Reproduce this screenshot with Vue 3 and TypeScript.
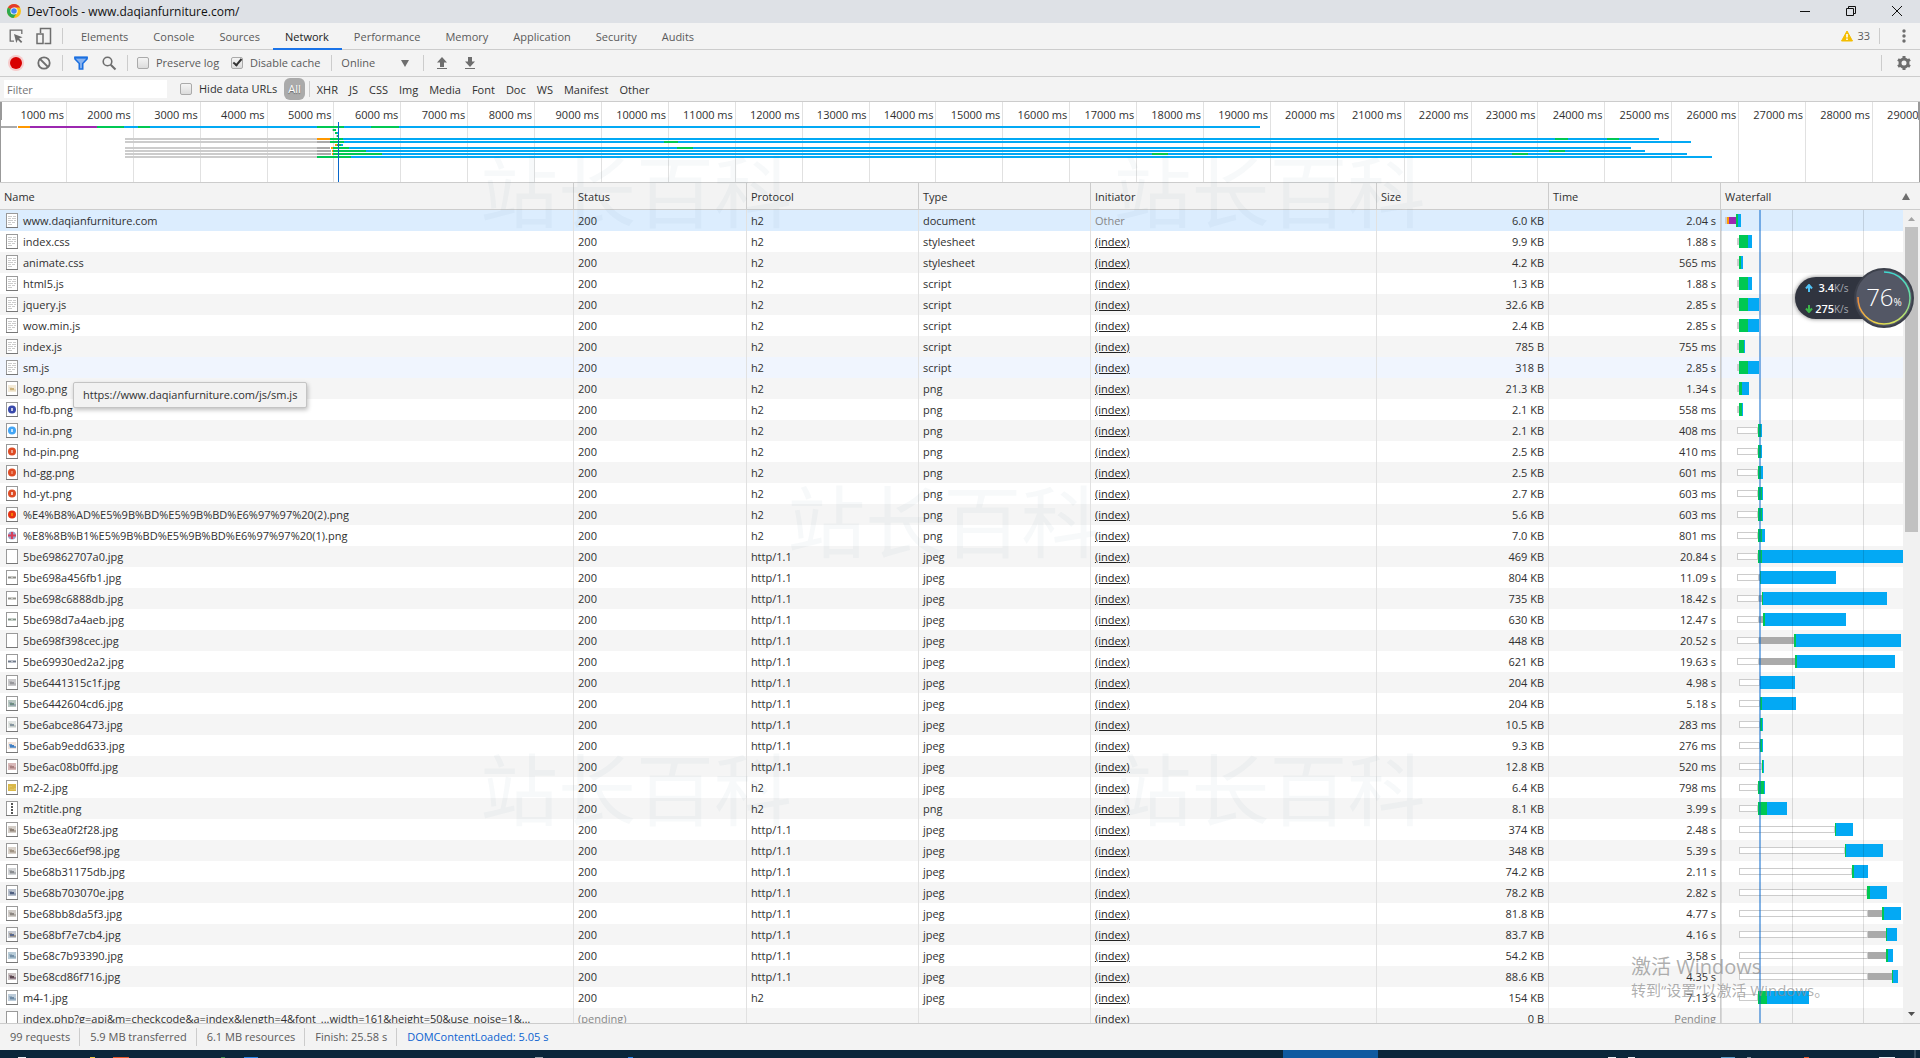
<script setup lang="ts">
type Kind = 'queue' | 'stall' | 'dns' | 'ssl' | 'wait' | 'load' | 'idle'
type Segment = [Kind, number, number]
interface Request {
  name: string
  status: string
  protocol: string
  type: string
  initiator: string
  size: string
  time: string
  thumb: string[]
  bars: Segment[]
}

const tabs = ['Elements', 'Console', 'Sources', 'Network', 'Performance', 'Memory', 'Application', 'Security', 'Audits']
const kinds = ['XHR', 'JS', 'CSS', 'Img', 'Media', 'Font', 'Doc', 'WS', 'Manifest', 'Other']
const ticks = Array.from({ length: 29 }, (_, i) => `${(i + 1) * 1000} ms`)
const columns = ['Name', 'Status', 'Protocol', 'Type', 'Initiator', 'Size', 'Time', 'Waterfall']
const summary = ['99 requests', '5.9 MB transferred', '6.1 MB resources', 'Finish: 25.58 s', 'DOMContentLoaded: 5.05 s']

const colors: Record<Kind, string> = {
  queue: '#ffffff', idle: '#cccccc', stall: '#aaaaaa', dns: '#ff9800', ssl: '#9c27b0', wait: '#00c853', load: '#03a9f4',
}

// Each overview lane is a list of [kind, start, end] on a 1920-unit axis.
const lanes: Segment[][] = [
  [['stall', 1, 17], ['dns', 18, 30], ['ssl', 30, 97], ['wait', 97, 124], ['load', 124, 138], ['wait', 138, 150], ['load', 150, 317], ['wait', 317, 344], ['load', 344, 371], ['wait', 371, 399], ['load', 399, 1260]],
  [['idle', 332, 333], ['wait', 333, 336]],
  [['wait', 335, 337], ['load', 337, 338]],
  [['idle', 336, 337], ['wait', 337, 339]],
  [['idle', 125, 317], ['dns', 317, 330], ['wait', 330, 343], ['load', 343, 1659], ['wait', 1555, 1568], ['wait', 1607, 1619]],
  [['idle', 125, 317], ['stall', 317, 330], ['wait', 330, 344], ['load', 344, 1691], ['wait', 664, 678]],
  [['dns', 335, 337], ['wait', 337, 341], ['load', 341, 343]],
  [['idle', 125, 317], ['stall', 317, 330], ['dns', 331, 333], ['wait', 333, 349], ['load', 349, 1631], ['wait', 677, 693]],
  [['idle', 125, 317], ['stall', 317, 331], ['dns', 332, 333], ['wait', 333, 366], ['load', 366, 1645], ['wait', 1549, 1565]],
  [['idle', 125, 317], ['stall', 317, 331], ['dns', 332, 333], ['wait', 333, 382], ['load', 382, 1687], ['wait', 1152, 1168], ['wait', 1512, 1528]],
  [['idle', 125, 317], ['wait', 317, 351], ['load', 351, 1712]],
]

const early = (wait: number, load: number): Segment[] => [['idle', 37, 39], ['wait', 39, wait], ['load', wait, load]]
const held = (from: number, to: number, wait: number, load: number): Segment[] => [['queue', from, to], ['wait', to, wait], ['load', wait, load]]
const stalled = (from: number, to: number, gray: number, wait: number, load: number): Segment[] => [['queue', from, to], ['stall', to, gray], ['wait', gray, wait], ['load', wait, load]]

const row = (name: string, protocol: string, type: string, size: string, time: string, thumb: string[], bars: Segment[]): Request =>
  ({ name, status: '200', protocol, type, initiator: '(index)', size, time, thumb, bars })

const doc = ['doc']
const dot = (color: string, mark: string) => ['dot', color, mark]
const wide = (a: string, b: string) => ['wide', a, b]
const pic = (a: string, b: string, c: string) => ['pic', a, b, c]

const requests: Request[] = [
  { ...row('www.daqianfurniture.com', 'h2', 'document', '6.0 KB', '2.04 s', doc, [['idle', 25, 27], ['dns', 27, 29], ['ssl', 29, 36], ['wait', 36, 38], ['load', 38, 41]]), initiator: 'Other' },
  row('index.css', 'h2', 'stylesheet', '9.9 KB', '1.88 s', doc, early(48, 52)),
  row('animate.css', 'h2', 'stylesheet', '4.2 KB', '565 ms', doc, early(41, 43)),
  row('html5.js', 'h2', 'script', '1.3 KB', '1.88 s', doc, early(48, 52)),
  row('jquery.js', 'h2', 'script', '32.6 KB', '2.85 s', doc, early(48, 59)),
  row('wow.min.js', 'h2', 'script', '2.4 KB', '2.85 s', doc, early(48, 59)),
  row('index.js', 'h2', 'script', '785 B', '755 ms', doc, early(44, 45)),
  row('sm.js', 'h2', 'script', '318 B', '2.85 s', doc, early(48, 59)),
  row('logo.png', 'h2', 'png', '21.3 KB', '1.34 s', pic('#f3ead8', '#cdb27a', '#e8dcc0'), early(42, 49)),
  row('hd-fb.png', 'h2', 'png', '2.1 KB', '558 ms', dot('#3949ab', '#ffffff'), early(42, 43)),
  row('hd-in.png', 'h2', 'png', '2.1 KB', '408 ms', dot('#42a5f5', '#ffffff'), held(37, 58, 61, 62)),
  row('hd-pin.png', 'h2', 'png', '2.5 KB', '410 ms', dot('#dd4b24', '#f6c8ba'), held(37, 58, 61, 62)),
  row('hd-gg.png', 'h2', 'png', '2.5 KB', '601 ms', dot('#dd4b24', '#f09a80'), held(37, 58, 61, 63)),
  row('hd-yt.png', 'h2', 'png', '2.7 KB', '603 ms', dot('#dd4b24', '#ffffff'), held(37, 58, 62, 63)),
  row('%E4%B8%AD%E5%9B%BD%E5%9B%BD%E6%97%97%20(2).png', 'h2', 'png', '5.6 KB', '603 ms', dot('#e53212', '#ff9800'), held(37, 58, 62, 63)),
  row('%E8%8B%B1%E5%9B%BD%E5%9B%BD%E6%97%97%20(1).png', 'h2', 'png', '7.0 KB', '801 ms', ['flag'], held(37, 58, 62, 65)),
  row('5be69862707a0.jpg', 'http/1.1', 'jpeg', '469 KB', '20.84 s', [], held(37, 58, 62, 203)),
  row('5be698a456fb1.jpg', 'http/1.1', 'jpeg', '804 KB', '11.09 s', wide('#8a8a86', '#c4c4c0'), stalled(37, 59, 60, 61, 136)),
  row('5be698c6888db.jpg', 'http/1.1', 'jpeg', '735 KB', '18.42 s', wide('#8f8f8a', '#c9c9c4'), stalled(37, 59, 62, 63, 187)),
  row('5be698d7a4aeb.jpg', 'http/1.1', 'jpeg', '630 KB', '12.47 s', wide('#7f8f84', '#c1cbc4'), stalled(37, 59, 63, 65, 146)),
  row('5be698f398cec.jpg', 'http/1.1', 'jpeg', '448 KB', '20.52 s', [], stalled(37, 59, 94, 96, 201)),
  row('5be69930ed2a2.jpg', 'http/1.1', 'jpeg', '621 KB', '19.63 s', wide('#6f7a88', '#b9bec8'), stalled(37, 59, 95, 97, 195)),
  row('5be6441315c1f.jpg', 'http/1.1', 'jpeg', '204 KB', '4.98 s', pic('#c9c9cb', '#97979b', '#b5b5b8'), held(39, 60, 60, 95)),
  row('5be6442604cd6.jpg', 'http/1.1', 'jpeg', '204 KB', '5.18 s', pic('#b9c8c2', '#6d8c82', '#9aa9b0'), held(39, 60, 62, 96)),
  row('5be6abce86473.jpg', 'http/1.1', 'jpeg', '10.5 KB', '283 ms', pic('#e2e6e4', '#8796a0', '#c6ccc8'), held(39, 60, 62, 63)),
  row('5be6ab9edd633.jpg', 'http/1.1', 'jpeg', '9.3 KB', '276 ms', pic('#f1e4dc', '#3f7fc4', '#6f9ccc'), held(39, 60, 62, 63)),
  row('5be6ac08b0ffd.jpg', 'http/1.1', 'jpeg', '12.8 KB', '520 ms', pic('#d8b8b8', '#a98080', '#c4a0a0'), held(39, 62, 63, 64)),
  row('m2-2.jpg', 'h2', 'jpeg', '6.4 KB', '798 ms', pic('#d9b84a', '#d9b84a', '#e0c463'), held(39, 58, 64, 65)),
  row('m2title.png', 'h2', 'png', '8.1 KB', '3.99 s', ['strip'], held(39, 58, 67, 87)),
  row('5be63ea0f2f28.jpg', 'http/1.1', 'jpeg', '374 KB', '2.48 s', pic('#d4cec8', '#8d8278', '#b0a69c'), held(39, 135, 136, 153)),
  row('5be63ec66ef98.jpg', 'http/1.1', 'jpeg', '348 KB', '5.39 s', pic('#d9d2ca', '#a09484', '#beb4a8'), held(39, 145, 146, 183)),
  row('5be68b31175db.jpg', 'http/1.1', 'jpeg', '74.2 KB', '2.11 s', pic('#d2d4d6', '#8a8d90', '#b1b4b8'), held(39, 152, 154, 168)),
  row('5be68b703070e.jpg', 'http/1.1', 'jpeg', '78.2 KB', '2.82 s', pic('#b8c0cc', '#4f5f80', '#94a0b4'), held(39, 167, 170, 187)),
  row('5be68bb8da5f3.jpg', 'http/1.1', 'jpeg', '81.8 KB', '4.77 s', pic('#d0ccc8', '#8c8682', '#b4b0aa'), stalled(39, 168, 182, 184, 201)),
  row('5be68bf7e7cb4.jpg', 'http/1.1', 'jpeg', '83.7 KB', '4.16 s', pic('#c4c8d0', '#58688c', '#a09890'), stalled(39, 168, 186, 187, 197)),
  row('5be68c7b93390.jpg', 'http/1.1', 'jpeg', '54.2 KB', '3.58 s', pic('#b8ccd8', '#7490a8', '#98b0c0'), stalled(39, 168, 186, 188, 193)),
  row('5be68cd86f716.jpg', 'http/1.1', 'jpeg', '88.6 KB', '4.35 s', pic('#c8c0c0', '#5c4850', '#94808c'), stalled(39, 168, 192, 193, 198)),
  row('m4-1.jpg', 'h2', 'jpeg', '154 KB', '7.13 s', pic('#bccbd8', '#6e8aa4', '#96aec2'), held(39, 58, 67, 109)),
  { ...row('index.php?g=api&m=checkcode&a=index&length=4&font_...width=161&height=50&use_noise=1&…', '', '', '0 B', 'Pending', [], []), status: '(pending)' },
]

const isThin = (kind: Kind) => kind === 'idle' || kind === 'stall' || kind === 'dns' || kind === 'ssl'

// Tips of the pinned programs: [start, width, colour] on a 1920-unit axis.
const pinned: [number, number, string][] = [
  [18, 8, '#e8eef2'], [90, 5, '#e8c84a'], [113, 16, '#e2582c'], [221, 4, '#3c8c50'], [244, 14, '#2a86e8'], [535, 8, '#9aa4ac'],
  [628, 5, '#2a86e8'], [1608, 8, '#e8eef2'], [1628, 7, '#e8eef2'], [1721, 14, '#5a9cc8'], [1747, 4, '#8898a4'], [1804, 5, '#e2582c'], [1879, 16, '#e8eef2'],
]
</script>

<template>
  <div class="window">
    <header class="titlebar">
      <svg class="chrome" width="16" height="16" viewBox="0 0 16 16">
        <circle cx="8" cy="8" r="7" fill="#fbc116" />
        <path d="M8 8 1.9 4.5A7 7 0 0 1 14.1 4.5H8z" fill="#e33b2e" />
        <path d="M8 8 1.9 4.5A7 7 0 0 0 7.5 15L11 9.8z" fill="#2da94f" />
        <circle cx="8" cy="8" r="3.6" fill="#fff" />
        <circle cx="8" cy="8" r="2.8" fill="#4285f4" />
      </svg>
      <h1>DevTools - www.daqianfurniture.com/</h1>
      <div class="controls">
        <button aria-label="Minimize"><svg width="12" height="12" viewBox="0 0 12 12"><path d="M1 6.5h10" /></svg></button>
        <button aria-label="Restore"><svg width="12" height="12" viewBox="0 0 12 12"><path d="M1.500 3.500h7v7h-7zM3.500 3.500v-2h7v7h-2" /></svg></button>
        <button aria-label="Close"><svg width="12" height="12" viewBox="0 0 12 12"><path d="M1 1l10 10M11 1L1 11" /></svg></button>
      </div>
    </header>

    <nav class="bar tabs">
      <button class="icon" aria-label="Inspect">
        <svg width="16" height="16" viewBox="0 0 16 16"><path d="M6 13.200H2.200V2.200h11.600V6" fill="none" stroke="#6e6e6e" stroke-width="1.300" /><path d="M6 6l8.500 3.200-3.400 1.300 3.200 3.300-1.300 1.200-3.200-3.300L8.300 15z" fill="#6e6e6e" /></svg>
      </button>
      <button class="icon device" aria-label="Device toolbar">
        <svg width="18" height="18" viewBox="0 0 18 18"><path d="M5.500 6V1.500h10v15H9.500" fill="none" stroke="#6e6e6e" stroke-width="1.500" /><path d="M2 7h6v9.500H2z" fill="none" stroke="#6e6e6e" stroke-width="1.500" /></svg>
      </button>
      <i class="sep"></i>
      <button v-for="t in tabs" :key="t" class="tab" :class="{ active: t === 'Network' }">{{ t }}</button>
      <span class="grow"></span>
      <svg width="12" height="12" viewBox="0 0 12 12"><path d="M6 1 11.500 11H.5z" fill="#f4bd00" stroke="#f4bd00" stroke-linejoin="round" /><path d="M6 4v3.500M6 8.500V10" stroke="#fff" stroke-width="1.600" /></svg>
      <span class="warnings">33</span>
      <i class="sep"></i>
      <button class="icon end" aria-label="More">
        <svg width="16" height="16" viewBox="0 0 16 16" fill="#6e6e6e"><circle cx="8" cy="3" r="1.700" /><circle cx="8" cy="8" r="1.700" /><circle cx="8" cy="13" r="1.700" /></svg>
      </button>
    </nav>

    <div class="bar tools">
      <button class="icon" aria-label="Record"><svg width="18" height="18" viewBox="0 0 18 18"><circle cx="9" cy="9" r="8" fill="#f7b8b8" opacity=".7" /><circle cx="9" cy="9" r="6" fill="#d80000" /></svg></button>
      <button class="icon" aria-label="Clear"><svg width="16" height="16" viewBox="0 0 16 16" fill="none" stroke="#6e6e6e" stroke-width="1.800"><circle cx="8" cy="8" r="5.700" /><path d="M4 4l8 8" /></svg></button>
      <i class="sep"></i>
      <button class="icon" aria-label="Filter"><svg width="16" height="16" viewBox="0 0 16 16"><path d="M2 2.500h12v1.500L9.700 8.500V14H6.300V8.500L2 4z" fill="#8ab4f0" stroke="#1a6fe0" stroke-width="1.600" /><path d="M1.300 2.500h13.400" stroke="#1a6fe0" stroke-width="2" /></svg></button>
      <button class="icon" aria-label="Search"><svg width="16" height="16" viewBox="0 0 16 16" fill="none" stroke="#6e6e6e"><circle cx="6.500" cy="6.500" r="4.300" stroke-width="1.600" /><path d="M9.700 9.700l4.800 4.800" stroke-width="2" /></svg></button>
      <i class="sep"></i>
      <label><input type="checkbox" />Preserve log</label>
      <label><input type="checkbox" checked />Disable cache</label>
      <i class="sep"></i>
      <span class="throttle"><select aria-label="Throttling"><option>Online</option></select></span>
      <i class="sep"></i>
      <button class="icon" aria-label="Import"><svg width="16" height="16" viewBox="0 0 16 16" fill="#6e6e6e"><path d="M8 2l5 5.500h-3V12H6V7.500H3zM3 13h10v1H3z" /></svg></button>
      <button class="icon" aria-label="Export"><svg width="16" height="16" viewBox="0 0 16 16" fill="#6e6e6e"><path d="M8 12l5-5.500h-3V2H6v4.500H3zM3 13h10v1H3z" /></svg></button>
      <span class="grow"></span>
      <i class="sep"></i>
      <button class="icon end" aria-label="Settings">
        <svg width="16" height="16" viewBox="0 0 16 16" fill="none" stroke="#6e6e6e"><circle cx="8" cy="8" r="4" stroke-width="3" /><path d="M8 1v3M8 12v3M2 4.500l2.500 1.500M11.500 10l2.500 1.500M2 11.500l2.500-1.500M11.500 6l2.500-1.500" stroke-width="3" /></svg>
      </button>
    </div>

    <div class="bar filters">
      <input class="search" type="text" placeholder="Filter" aria-label="Filter" />
      <label><input type="checkbox" />Hide data URLs</label>
      <button class="all">All</button>
      <i class="sep"></i>
      <button v-for="k in kinds" :key="k" class="kind">{{ k }}</button>
    </div>

    <section class="overview">
      <div class="ticks"><span v-for="t in ticks" :key="t">{{ t }}</span></div>
      <svg class="lanes" viewBox="0 0 1920 80" preserveAspectRatio="none" shape-rendering="crispEdges">
        <g v-for="(lane, i) in lanes" :key="i">
          <rect v-for="(s, j) in lane" :key="j" :x="s[1]" :y="24 + i * 3" :width="s[2] - s[1]" height="2" :fill="colors[s[0]]" />
        </g>
        <rect x="338" y="20" width="1" height="60" fill="#0867cb" />
        <path d="M0 0h2v18H1v62H0zM1918 0h2v80h-1V18h-1z" fill="#999" />
      </svg>
    </section>

    <main class="grid">
      <table>
        <colgroup><col v-for="c in columns" :key="c" :class="c.toLowerCase()" /></colgroup>
        <thead>
          <tr><th v-for="c in columns" :key="c" scope="col"><span>{{ c }}</span><svg v-if="c === 'Waterfall'" width="8" height="7" viewBox="0 0 8 7"><path d="M4 0l4 7H0z" fill="#6e6e6e" /></svg></th></tr>
        </thead>
        <tbody>
          <tr v-for="(r, i) in requests" :key="r.name" :class="{ selected: i === 0, hovered: i === 7 }">
            <td>
              <div class="file">
                <svg width="12" height="15" viewBox="0 0 12 15">
                  <rect x=".5" y=".5" width="11" height="14" fill="#fff" stroke="#9a9a9a" />
                  <path d="M0 14.500h12" stroke="#777" />
                  <path v-if="r.thumb[0] === 'doc'" d="M2 3.500h4m1 0h3M2 5.500h3m1 0h4M2 7.500h5m1 0h2M2 9.500h3m1 0h3M2 11.500h4" stroke="#ccc" />
                  <g v-else-if="r.thumb[0] === 'dot'"><circle cx="6" cy="7.500" r="4" :fill="r.thumb[1]" /><path d="M5 6h2v3H5z" :fill="r.thumb[2]" opacity=".7" /></g>
                  <g v-else-if="r.thumb[0] === 'wide'"><path d="M2 6h8v3H2z" :fill="r.thumb[2]" /><path d="M2 7h3v1h2V7h3v1H2z" :fill="r.thumb[1]" /></g>
                  <g v-else-if="r.thumb[0] === 'flag'"><circle cx="6" cy="7.500" r="4" fill="#9aa0cc" /><path d="M2 7.500h8M6 4v7" stroke="#d6405a" stroke-width="2" /></g>
                  <path v-else-if="r.thumb[0] === 'strip'" d="M6 2v11" stroke="#555" stroke-width="2" stroke-dasharray="2 1" />
                  <g v-else-if="r.thumb[0] === 'pic'"><path d="M2 4h8v7H2z" :fill="r.thumb[1]" /><path d="M3 6h3v2h4v2H4z" :fill="r.thumb[3]" /><path d="M4 7h4v2H4z" :fill="r.thumb[2]" /></g>
                </svg>
                <span>{{ r.name }}</span>
              </div>
            </td>
            <td :class="{ dim: r.status !== '200' }">{{ r.status }}</td>
            <td>{{ r.protocol }}</td>
            <td>{{ r.type }}</td>
            <td><span v-if="r.initiator === 'Other'" class="dim">Other</span><a v-else href="#">{{ r.initiator }}</a></td>
            <td class="num">{{ r.size }}</td>
            <td class="num" :class="{ dim: r.time === 'Pending' }">{{ r.time }}</td>
            <td class="fall">
              <svg viewBox="21 0 182 21" preserveAspectRatio="none" shape-rendering="crispEdges">
                <template v-for="(s, j) in r.bars" :key="j">
                  <rect v-if="s[0] === 'queue'" :x="s[1] + 0.5" y="7.5" :width="s[2] - s[1] - 1" height="6" fill="#fff" stroke="#ccc" />
                  <rect v-else :x="s[1]" :y="isThin(s[0]) ? 7 : 4" :width="s[2] - s[1]" :height="isThin(s[0]) ? 7 : 13" :fill="colors[s[0]]" />
                </template>
                <path d="M21 0h1v21h-1zM92 0h1v21h-1zM163 0h1v21h-1z" fill="#000" opacity=".12" />
                <path d="M59 0h2v21h-2z" fill="#0867cb" opacity=".5" />
              </svg>
            </td>
          </tr>
        </tbody>
      </table>
      <div class="scrollbar">
        <svg width="17" height="17" viewBox="0 0 17 17"><path d="M5 11h7L8.500 7z" fill="#a3a3a3" /></svg>
        <div class="thumb"></div>
        <svg width="17" height="17" viewBox="0 0 17 17"><path d="M5 6h7L8.500 10z" fill="#505050" /></svg>
      </div>
      <div class="tooltip" role="tooltip">https://www.daqianfurniture.com/js/sm.js</div>
    </main>

    <footer class="summary"><span v-for="s in summary" :key="s">{{ s }}</span></footer>

    <div class="taskbar">
      <svg viewBox="0 0 1920 8" preserveAspectRatio="none">
        <rect x="1283" width="95" height="8" fill="#0f5aa0" />
        <rect v-for="(p, i) in pinned" :key="i" :x="p[0]" y="7" :width="p[1]" height="1" :fill="p[2]" />
        <path d="M1915 0v8" stroke="#5a7080" />
      </svg>
    </div>

    <span v-for="n in 5" :key="n" class="mark" :class="'mark' + n" aria-hidden="true">站长百科</span>

    <div class="activate"><strong>激活 Windows</strong><span>转到“设置”以激活 Windows。</span></div>

    <aside class="meter">
      <div class="rates">
        <p><svg width="8" height="8" viewBox="0 0 8 8"><path d="M4 8V2M1 4.500 4 1l3 3.500" fill="none" stroke="#4fc3f7" stroke-width="2" /></svg><b>3.4</b><small>K/s</small></p>
        <p><svg width="8" height="8" viewBox="0 0 8 8"><path d="M4 0v6M1 3.500 4 7l3-3.500" fill="none" stroke="#3cb54a" stroke-width="2" /></svg><b>275</b><small>K/s</small></p>
      </div>
      <div class="dial">
        <svg width="60" height="60" viewBox="0 0 60 60" fill="none" stroke-width="1.500">
          <defs>
            <linearGradient id="arcRight" x1="0" y1="0" x2="0" y2="1"><stop offset="0" stop-color="#3fd8d0" /><stop offset=".5" stop-color="#6fdc9c" /><stop offset="1" stop-color="#d8e05a" /></linearGradient>
            <linearGradient id="arcLeft" x1="1" y1="1" x2="0" y2="0"><stop offset="0" stop-color="#e8e04c" /><stop offset="1" stop-color="#f08a3c" /></linearGradient>
          </defs>
          <circle cx="30" cy="30" r="29" fill="#535765" stroke="#3c404b" stroke-width="2" />
          <path d="M30 4a26 26 0 0 1 0 52" stroke="url(#arcRight)" />
          <path d="M30 56A26 26 0 0 1 4 29" stroke="url(#arcLeft)" />
        </svg>
        <div class="value"><span>76</span><small>%</small></div>
      </div>
    </aside>
  </div>
</template>

<style>
body { margin: 0; overflow: hidden; }
</style>

<style scoped>
.window { position: relative; display: flex; flex-direction: column; height: 100vh; overflow: hidden; background: #f3f3f3; color: #303030; font: 11px/20px "Open Sans", "Noto Sans CJK SC", sans-serif; }
button { border: 0; padding: 0; margin: 0; background: none; font: inherit; color: inherit; }
svg { flex: none; }
.grow { flex: 1; }
.titlebar { display: flex; align-items: center; flex: none; height: 23px; padding: 0 11px 2px 6px; box-sizing: border-box; background: #dee1e6; }
.titlebar h1 { flex: 1; margin: 0 0 0 5px; padding-top: 2px; font-size: 12px; font-weight: 400; line-height: 18px; color: #111; }
.controls { display: flex; }
.controls button { display: flex; justify-content: center; align-items: center; width: 46px; height: 18px; }
.controls button:last-child { width: 24px; margin-left: 11px; }
.controls svg { fill: none; stroke: #111; stroke-width: 1; }
.bar { display: flex; align-items: center; flex: none; height: 26px; border-bottom: 1px solid #ccc; color: #5a5a5a; }
.icon { display: flex; align-items: center; justify-content: center; flex: none; width: 28px; height: 24px; }
.icon:first-child { margin-left: 2px; }
.icon.end { width: 24px; margin: 0 4px 0 6px; }
.sep { flex: none; width: 1px; height: 16px; background: #ccc; margin: 0 4px; }
.tabs .sep { margin: 0 6px 0 4px; }
.tab { box-sizing: border-box; height: 27px; margin-bottom: -1px; padding: 2px 13px 0 12px; border-bottom: 2px solid transparent; }
.tab.active { color: #222; border-bottom-color: #1a73e8; }
.warnings { margin: 0 5px 0 4px; }
.tools label, .filters label { display: flex; align-items: center; margin: 0 7px 0 5px; }
input[type="checkbox"] { appearance: none; flex: none; display: grid; place-items: center; width: 12px; height: 12px; margin: 0 7px 0 0; border: 1px solid #aaa; border-radius: 2px; background: linear-gradient(#f4f4f4, #dcdcdc); }
input[type="checkbox"]:checked::after { content: ""; width: 3px; height: 7px; margin-top: -3px; border: solid #333; border-width: 0 2px 2px 0; transform: rotate(40deg); }
.throttle { position: relative; width: 78px; margin: 0 0 0 5px; }
.throttle::after { content: ""; position: absolute; right: 10px; top: 7px; border: solid transparent; border-width: 7px 4px 0; border-top-color: #6e6e6e; pointer-events: none; }
select { appearance: none; width: 100%; border: 0; padding: 0; background: none; font: inherit; color: inherit; }
.filters { height: 24px; color: #303030; }
.search { box-sizing: border-box; width: 163px; height: 18px; margin: 0 8px 0 4px; padding: 1px 3px 0; border: 0; background: #fff; font: inherit; }
.search::placeholder { color: #757575; }
.all { height: 22px; padding: 0 4px; border-radius: 6px; background: #aaa; color: #fff; text-shadow: 0 1px 1px #666; }
.filters .sep { margin: 0 2px 0 4px; }
.kind { padding: 2px 6px 0 5px; }
.overview { position: relative; flex: none; height: 80px; border-bottom: 1px solid #ccc; background: #fff; overflow: hidden; }
.ticks { display: flex; height: 100%; }
.ticks span { box-sizing: border-box; flex: none; width: calc(100% / 28.7); padding: 3px 2px 0 0; border-right: 1px solid #e1e1e1; text-align: right; white-space: nowrap; }
.lanes { position: absolute; inset: 0; width: 100%; height: 100%; }
.grid { position: relative; flex: 1; min-height: 0; overflow: hidden; background: #fff; }
table { width: 100%; table-layout: fixed; border-collapse: separate; border-spacing: 0; line-height: 21px; }
.name { width: 29.9%; }
.status { width: 9%; }
.protocol, .type, .size, .time { width: 8.96%; }
.initiator { width: 14.9%; }
th { height: 26px; padding: 0 4px; border-right: 1px solid #ccc; border-bottom: 1px solid #ccc; background: #f3f3f3; font-weight: 400; text-align: left; }
th:last-child { display: flex; align-items: center; justify-content: space-between; padding-right: 10px; border-right: 0; }
td { height: 21px; padding: 0 4px; border-right: 1px solid #e1e1e1; white-space: nowrap; overflow: hidden; }
th:nth-child(7), td:nth-child(7) { border-right-color: #ccc; }
tr:nth-child(odd) td { background: #f5f5f5; }
tr.selected td { background: #dcedfe; }
tr.hovered td { background: #f0f5fe; }
.file { display: flex; align-items: center; gap: 5px; height: 21px; padding-left: 2px; }
.num { text-align: right; }
td a { color: #222; text-decoration: underline; }
.dim { color: #888; }
td.fall { padding: 0 17px 0 0; border: 0; }
.fall svg { display: block; width: 100%; height: 21px; }
.scrollbar { position: absolute; top: 27px; right: 0; bottom: 0; display: flex; flex-direction: column; width: 17px; background: #f1f1f1; }
.thumb { flex: none; height: 37.5%; min-height: 20px; margin: 0 2px auto; background: #c1c1c1; }
.tooltip { position: absolute; left: 73px; top: 199px; padding: 2px 9px; border: 1px solid #c4c4c4; border-radius: 2px; background: #f2f2f2; box-shadow: 1px 2px 4px rgba(0, 0, 0, .25); }
.summary { display: flex; align-items: center; flex: none; height: 26px; border-top: 1px solid #ccc; color: #5a5a5a; }
.summary span { padding: 0 9px 0 10px; line-height: 18px; border-right: 1px solid #ccc; }
.summary span:last-child { border: 0; color: #0b62d0; }
.taskbar { flex: none; height: 8px; background: #0a263a; }
.taskbar svg { display: block; width: 100%; height: 8px; }
.mark { position: absolute; font-size: 78px; line-height: 80px; color: rgba(60, 90, 120, .04); pointer-events: none; }
.mark1 { left: 25%; top: 152px; }
.mark2 { left: 58%; top: 152px; }
.mark3 { left: 41%; top: 482px; }
.mark4 { left: 25%; top: 750px; }
.mark5 { left: 58%; top: 750px; }
.activate { position: absolute; right: 94px; bottom: 58px; display: flex; flex-direction: column; width: 195px; color: rgba(140, 140, 140, .7); font-size: 15px; line-height: 20px; white-space: nowrap; }
.activate strong { font-size: 20px; font-weight: 400; line-height: 26px; }
.meter { position: absolute; top: 268px; right: 6px; display: flex; align-items: center; color: #fff; }
.rates { display: flex; flex-direction: column; justify-content: space-around; box-sizing: border-box; width: 80px; height: 42px; margin-right: -21px; padding-left: 10px; border-radius: 21px 0 0 21px; background: #30343f; box-shadow: 0 0 4px rgba(0, 0, 0, .5); }
.rates p { display: flex; align-items: center; margin: 0; line-height: 18px; }
.rates b { width: 20px; margin-left: 1px; font-weight: 600; text-align: right; }
.rates small { font-size: 10px; color: #a4a8b0; }
.dial { position: relative; height: 60px; }
.value { position: absolute; inset: 0; display: flex; align-items: baseline; justify-content: center; line-height: 58px; font-weight: 300; }
.value span { font-size: 24px; }
.value small { font-size: 10px; font-weight: 400; }
</style>
